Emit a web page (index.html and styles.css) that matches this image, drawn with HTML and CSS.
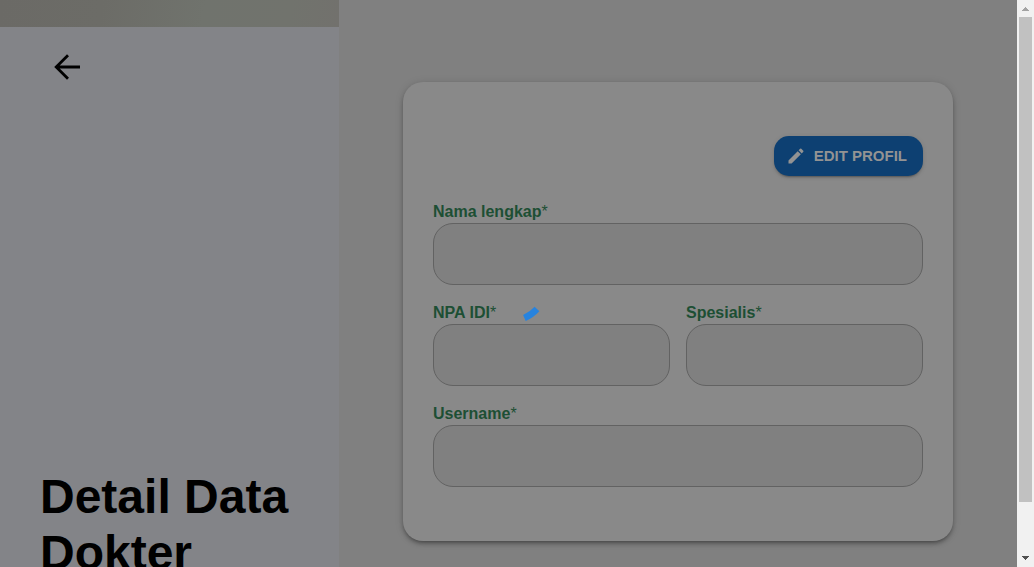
FILE: index.html
```html
<!DOCTYPE html>
<html lang="id">
<head>
<meta charset="utf-8">
<title>Detail Data Dokter</title>
<link rel="stylesheet" href="styles.css">
</head>
<body>
<div class="app">
  <aside class="side">
    <div class="photo"></div>
    <div class="side-panel">
      <button class="back" type="button" aria-label="Kembali">
        <svg viewBox="0 0 26 26" width="26" height="26" fill="none" stroke="#000" stroke-width="2.8"><path d="M26 13H2M14 1.2 2.2 13 14 24.8"/></svg>
      </button>
      <h1 class="title">Detail Data Dokter</h1>
    </div>
  </aside>
  <main class="content">
    <form class="card">
      <button class="edit" type="button">
        <svg viewBox="0 0 24 24" width="20" height="20" fill="currentColor"><path d="M3 17.25V21h3.75L17.81 9.94l-3.75-3.75L3 17.25zM20.71 7.04a1 1 0 0 0 0-1.41l-2.34-2.34a1 1 0 0 0-1.41 0l-1.83 1.83 3.75 3.75 1.83-1.83z"/></svg>
        <span>EDIT PROFIL</span>
      </button>
      <div class="field">
        <label class="label" for="nama">Nama lengkap<span class="star">*</span></label>
        <input class="input" id="nama" type="text">
      </div>
      <div class="row">
        <div class="field">
          <label class="label" for="npa">NPA IDI<span class="star">*</span></label>
          <input class="input" id="npa" type="text">
        </div>
        <div class="field">
          <label class="label" for="spesialis">Spesialis<span class="star">*</span></label>
          <input class="input" id="spesialis" type="text">
        </div>
      </div>
      <div class="field">
        <label class="label" for="username">Username<span class="star">*</span></label>
        <input class="input" id="username" type="text">
      </div>
    </form>
  </main>
  <div class="scrollbar" aria-hidden="true">
    <svg viewBox="0 0 17 17" width="17" height="17" fill="#a3a3a3" shape-rendering="crispEdges"><path d="M8 7h1v1h1v1h1v1h1v1H5v-1h1V9h1V8h1z"/></svg>
    <div class="track"><div class="thumb"></div></div>
    <svg viewBox="0 0 17 17" width="17" height="17" fill="#505050" shape-rendering="crispEdges"><path d="M5 6h7v1h-1v1h-1v1H9v1H8V9H7V8H6V7H5z"/></svg>
  </div>
  <div class="loading">
    <svg viewBox="-41 -41 82 82" width="82" height="82" fill="none" stroke="#2783de" stroke-width="6.5"><path d="M15.4 34A37.5 37.5 0 0 0 28 25"/></svg>
  </div>
</div>
</body>
</html>
```
FILE: styles.css
```css
* { box-sizing: border-box; }
body {
  margin: 0;
  font-family: "Liberation Sans", Arial, sans-serif;
  background: #808080;
}
.app {
  position: relative;
  display: grid;
  grid-template-columns: minmax(0, 1fr) minmax(0, 2fr) 17px;
  grid-template-rows: minmax(0, 1fr);
  height: 100vh;
  overflow: hidden;
}
.side {
  display: flex;
  flex-direction: column;
  background: #838488;
}
.photo {
  flex: 0 0 27px;
  background: linear-gradient(100deg, #6b6a66, #6c6c67 30%, #70736d 60%, #71736d 85%, #72716d);
}
.side-panel {
  flex: 1 0 auto;
  padding: 27px 40px 0;
}
.back {
  display: block;
  margin: 0 14px;
  padding: 0;
  border: 0;
  background: none;
}
.back svg { display: block; }
.title {
  margin: 389px 0 0;
  font-size: 48px;
  line-height: 56px;
  font-weight: 700;
  color: #000;
}
.content {
  padding: 82px 64px 26px;
}
.card {
  display: flex;
  flex-direction: column;
  gap: 16px;
  padding: 54px 30px;
  border-radius: 20px;
  background: #898989;
  box-shadow: 0 3px 3px -2px rgba(0,0,0,.2), 0 3px 4px rgba(0,0,0,.22), 0 1px 8px rgba(0,0,0,.14);
}
.edit {
  align-self: flex-end;
  display: flex;
  align-items: center;
  gap: 8px;
  height: 40px;
  margin-bottom: 8px;
  padding: 0 16px 0 12px;
  border: 0;
  border-radius: 15px;
  background: #0d4072;
  color: #939393;
  font: 700 15px/24px "Liberation Sans", Arial, sans-serif;
  box-shadow: 0 3px 1px -2px rgba(0,0,0,.15), 0 2px 2px rgba(0,0,0,.12), 0 1px 5px rgba(0,0,0,.1);
}
.row {
  display: grid;
  grid-template-columns: 1fr 1fr;
  gap: 16px;
}
.label {
  display: block;
  font-size: 16px;
  line-height: 23px;
  font-weight: 700;
  color: #1d4f34;
}
.star { font-weight: 400; }
.input {
  display: block;
  width: 100%;
  height: 62px;
  padding: 0 14px;
  border: 1px solid #626262;
  border-radius: 20px;
  background: #808080;
  font: 16px "Liberation Sans", Arial, sans-serif;
}
.scrollbar {
  display: flex;
  flex-direction: column;
  background: #f1f1f1;
}
.scrollbar svg { display: block; }
.track {
  flex: 1;
  padding: 0 2px;
}
.thumb {
  height: 91%;
  background: #c1c1c1;
}
.loading {
  position: absolute;
  inset: 0 17px 0 0;
  display: flex;
  align-items: center;
  justify-content: center;
  pointer-events: none;
}
```
